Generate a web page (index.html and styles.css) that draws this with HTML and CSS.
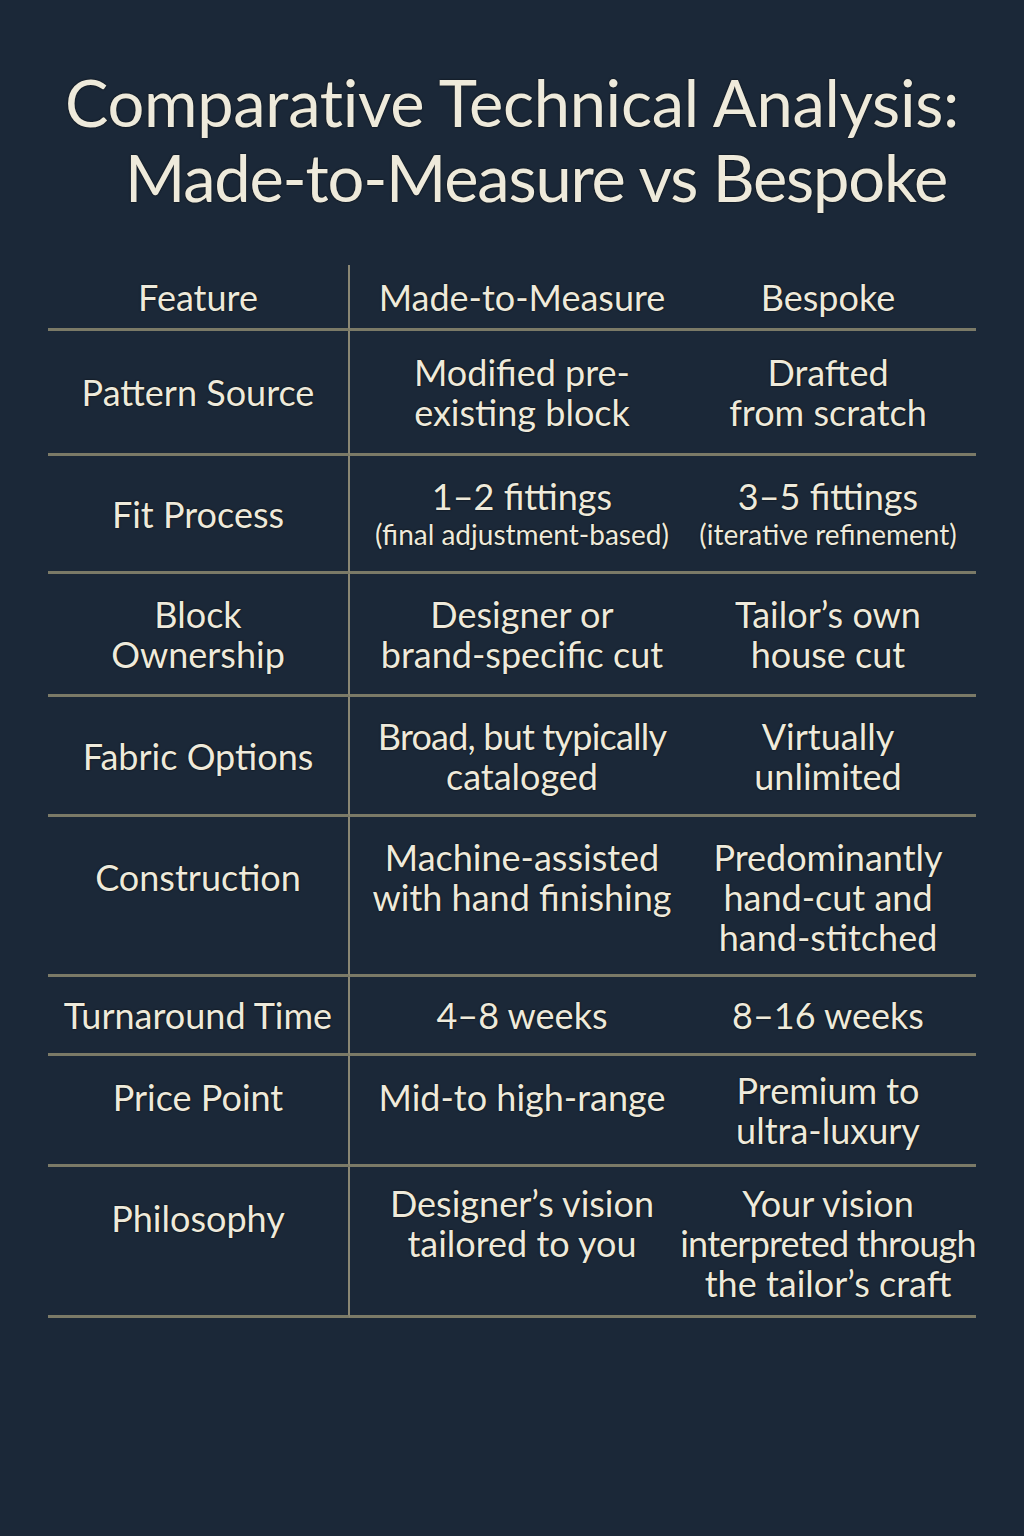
FILE: index.html
```html
<!DOCTYPE html>
<html lang="en">
<head>
<meta charset="utf-8">
<title>Comparative Technical Analysis</title>
<link rel="stylesheet" href="styles.css">
</head>
<body>
<main class="page">
  <h1 class="title">
    <span class="title-line">Comparative Technical Analysis:</span>
    <span class="title-line title-line--shift">Made-to-Measure vs Bespoke</span>
  </h1>

  <div class="table">
    <div class="cell feat head">Feature</div>
    <div class="cell mtm head">Made-to-Measure</div>
    <div class="cell bsp head">Bespoke</div>

    <div class="cell feat">Pattern Source</div>
    <div class="cell mtm">Modified pre-<br>existing block</div>
    <div class="cell bsp">Drafted<br>from scratch</div>

    <div class="cell feat">Fit Process</div>
    <div class="cell mtm">1–2 fittings<span class="note">(final adjustment-based)</span></div>
    <div class="cell bsp">3–5 fittings<span class="note">(iterative refinement)</span></div>

    <div class="cell feat">Block<br>Ownership</div>
    <div class="cell mtm">Designer or<br>brand-specific cut</div>
    <div class="cell bsp">Tailor’s own<br>house cut</div>

    <div class="cell feat">Fabric Options</div>
    <div class="cell mtm"><span class="tight">Broad, but typically</span>cataloged</div>
    <div class="cell bsp">Virtually<br>unlimited</div>

    <div class="cell feat top pad-40">Construction</div>
    <div class="cell mtm top pad-20">Machine-assisted<br>with hand finishing</div>
    <div class="cell bsp top pad-20">Predominantly<br>hand-cut and<br>hand-stitched</div>

    <div class="cell feat">Turnaround Time</div>
    <div class="cell mtm">4–8 weeks</div>
    <div class="cell bsp">8–16 weeks</div>

    <div class="cell feat top pad-21">Price Point</div>
    <div class="cell mtm top pad-21">Mid-to high-range</div>
    <div class="cell bsp">Premium to<br>ultra-luxury</div>

    <div class="cell feat top pad-31">Philosophy</div>
    <div class="cell mtm top pad-16">Designer’s vision<br>tailored to you</div>
    <div class="cell bsp top pad-16">Your vision<br><span class="tight">interpreted through</span>the tailor’s craft</div>
  </div>
</main>
</body>
</html>
```

FILE: styles.css
```css
* {
  box-sizing: border-box;
}

html,
body {
  margin: 0;
  padding: 0;
}

body {
  background: #1b2838;
  color: #eeeadb;
  font-family: Lato, "Open Sans", "Noto Sans", sans-serif;
  width: 1024px;
  min-height: 1536px;
}

.page {
  padding: 65px 48px 0;
}

.title {
  margin: 0;
  font-weight: 400;
  font-size: 65px;
  line-height: 75px;
  text-align: center;
  letter-spacing: -0.3px;
  white-space: nowrap;
  text-shadow: 0 0 2px rgba(0, 0, 0, 0.9);
}

.title-line {
  display: block;
}

.title-line--shift {
  padding-left: 48px;
  letter-spacing: -1.2px;
}

.table {
  margin-top: 50px;
  display: grid;
  grid-template-columns: 302px 330px 296px;
  grid-template-rows: 66px 125px 118px 123px 120px 160px 79px 111px 151px;
  font-size: 36px;
  line-height: 40px;
  text-shadow: 0 0 2px rgba(0, 0, 0, 0.9);
}

.cell {
  display: flex;
  flex-direction: column;
  justify-content: center;
  align-items: center;
  text-align: center;
  white-space: nowrap;
  border-bottom: 3px solid #7b7a67;
}

.feat {
  border-right: 2px solid #8a8774;
}

.mtm {
  padding-left: 14px;
}

.top {
  justify-content: flex-start;
}

.pad-16 { padding-top: 16px; }
.pad-20 { padding-top: 20px; }
.pad-21 { padding-top: 21px; }
.pad-31 { padding-top: 31px; }
.pad-40 { padding-top: 40px; }

.note {
  display: block;
  font-size: 28px;
  line-height: 36px;
}

.tight {
  display: block;
  letter-spacing: -0.8px;
}
```
